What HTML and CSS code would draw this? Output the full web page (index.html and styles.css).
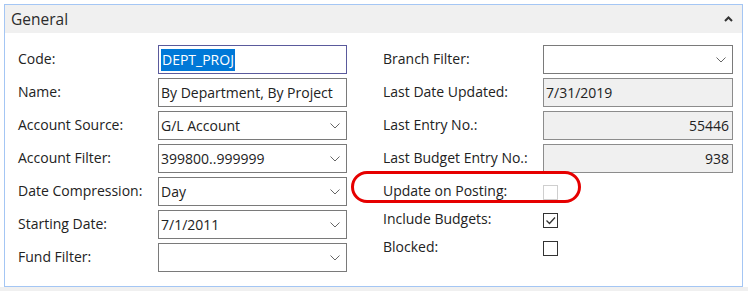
FILE: index.html
```html
<!DOCTYPE html>
<html lang="en">
<head>
    <meta charset="UTF-8">
    <title>Budget - General</title>
    <link rel="stylesheet" href="styles.css">
</head>
<body>
    <div class="page">
        <section class="panel">
            <header class="panel-head">
                <h2>General</h2>
                <svg class="collapse" width="9" height="6" viewBox="0 0 9 6"><polyline points="1,5 4.5,1.5 8,5" fill="none" stroke="#333" stroke-width="2"/></svg>
            </header>

            <div class="panel-body">
                <div class="col">
                    <div class="row">
                        <label>Code:</label>
                        <div class="field focused"><span class="sel">DEPT_PROJ</span></div>
                    </div>
                    <div class="row">
                        <label>Name:</label>
                        <div class="field">By Department, By Project</div>
                    </div>
                    <div class="row">
                        <label>Account Source:</label>
                        <div class="field drop">G/L Account<svg class="chev" width="10" height="6" viewBox="0 0 10 6"><polyline points="0.5,0.5 5,5 9.5,0.5" fill="none" stroke="#666" stroke-width="1"/></svg></div>
                    </div>
                    <div class="row">
                        <label>Account Filter:</label>
                        <div class="field drop">399800..999999<svg class="chev" width="10" height="6" viewBox="0 0 10 6"><polyline points="0.5,0.5 5,5 9.5,0.5" fill="none" stroke="#666" stroke-width="1"/></svg></div>
                    </div>
                    <div class="row">
                        <label>Date Compression:</label>
                        <div class="field drop">Day<svg class="chev" width="10" height="6" viewBox="0 0 10 6"><polyline points="0.5,0.5 5,5 9.5,0.5" fill="none" stroke="#666" stroke-width="1"/></svg></div>
                    </div>
                    <div class="row">
                        <label>Starting Date:</label>
                        <div class="field drop">7/1/2011<svg class="chev" width="10" height="6" viewBox="0 0 10 6"><polyline points="0.5,0.5 5,5 9.5,0.5" fill="none" stroke="#666" stroke-width="1"/></svg></div>
                    </div>
                    <div class="row">
                        <label>Fund Filter:</label>
                        <div class="field drop"><svg class="chev" width="10" height="6" viewBox="0 0 10 6"><polyline points="0.5,0.5 5,5 9.5,0.5" fill="none" stroke="#666" stroke-width="1"/></svg></div>
                    </div>
                </div>

                <div class="col right">
                    <div class="row">
                        <label>Branch Filter:</label>
                        <div class="field drop"><svg class="chev" width="10" height="6" viewBox="0 0 10 6"><polyline points="0.5,0.5 5,5 9.5,0.5" fill="none" stroke="#666" stroke-width="1"/></svg></div>
                    </div>
                    <div class="row">
                        <label>Last Date Updated:</label>
                        <div class="field readonly">7/31/2019</div>
                    </div>
                    <div class="row">
                        <label>Last Entry No.:</label>
                        <div class="field readonly num">55446</div>
                    </div>
                    <div class="row">
                        <label>Last Budget Entry No.:</label>
                        <div class="field readonly num">938</div>
                    </div>
                    <div class="row check-row">
                        <label>Update on Posting:</label>
                        <span class="box disabled"></span>
                    </div>
                    <div class="row check-row">
                        <label>Include Budgets:</label>
                        <span class="box"><svg width="13" height="13" viewBox="0 0 13 13"><polyline points="2.5,6.5 5.5,9.5 11,3.5" fill="none" stroke="#333" stroke-width="1.3"/></svg></span>
                    </div>
                    <div class="row check-row">
                        <label>Blocked:</label>
                        <span class="box"></span>
                    </div>
                </div>

                <!-- red annotation around "Update on Posting" -->
                <div class="callout"></div>
            </div>
        </section>
    </div>
</body>
</html>
```

FILE: styles.css
```css
/* Page */
html { background: #f0f0f0; }
body { margin: 0; font-family: "Open Sans", "Noto Sans", sans-serif; font-size: 14px; color: #222; }
.page { background: #fff; padding: 4px 5px 0 4px; }

/* Panel */
.panel { border: 1px solid #a4c6f4; background: #fff; }
.panel-head { display: flex; align-items: center; justify-content: space-between; height: 28px; background: #f0f0f0; padding: 0 9px 0 6px; }
.panel-head h2 { margin: 0; font-size: 15.5px; font-weight: normal; color: #2b2b2b; }
.collapse { margin-bottom: 1px; }

.panel-body { position: relative; display: flex; gap: 36px; padding: 12px 9px 14px 13px; }
.col { display: flex; flex-direction: column; width: 329px; }
.col.right { width: 350px; }

/* Rows */
.row { display: flex; align-items: center; height: 29px; margin-bottom: 4px; }
.row:last-child { margin-bottom: 0; }
.row label { width: 140px; flex-shrink: 0; padding-bottom: 2px; }
.right .row label { width: 160px; }

.field { box-sizing: border-box; width: 189px; height: 29px; border: 1px solid #7a7a7a; display: flex; align-items: center; padding: 0 2px; white-space: nowrap; overflow: hidden; }
.right .field { width: 190px; }
.field.focused { border-color: #5a5a9c; }
.field .sel { background: #0078d7; color: #fff; line-height: 22px; padding: 0 1px; }
.field.drop { justify-content: space-between; padding-right: 6px; }
.chev { flex-shrink: 0; margin-left: auto; }
.field.readonly { background: #f0f0f0; border-color: #8c8c8c; }
.field.num { justify-content: flex-end; padding-right: 3px; }

/* Checkbox rows */
.check-row { height: 28px; margin-bottom: 0; }
.box { box-sizing: border-box; width: 15px; height: 15px; border: 1px solid #333; display: flex; align-items: center; justify-content: center; margin-top: 3px; }
.box.disabled { border-color: #cfcfcf; }

/* Annotation overlay */
.callout { position: absolute; left: 346px; top: 138px; width: 230px; height: 32px; box-sizing: border-box; border: 3px solid #e60000; border-radius: 16px; }
```
